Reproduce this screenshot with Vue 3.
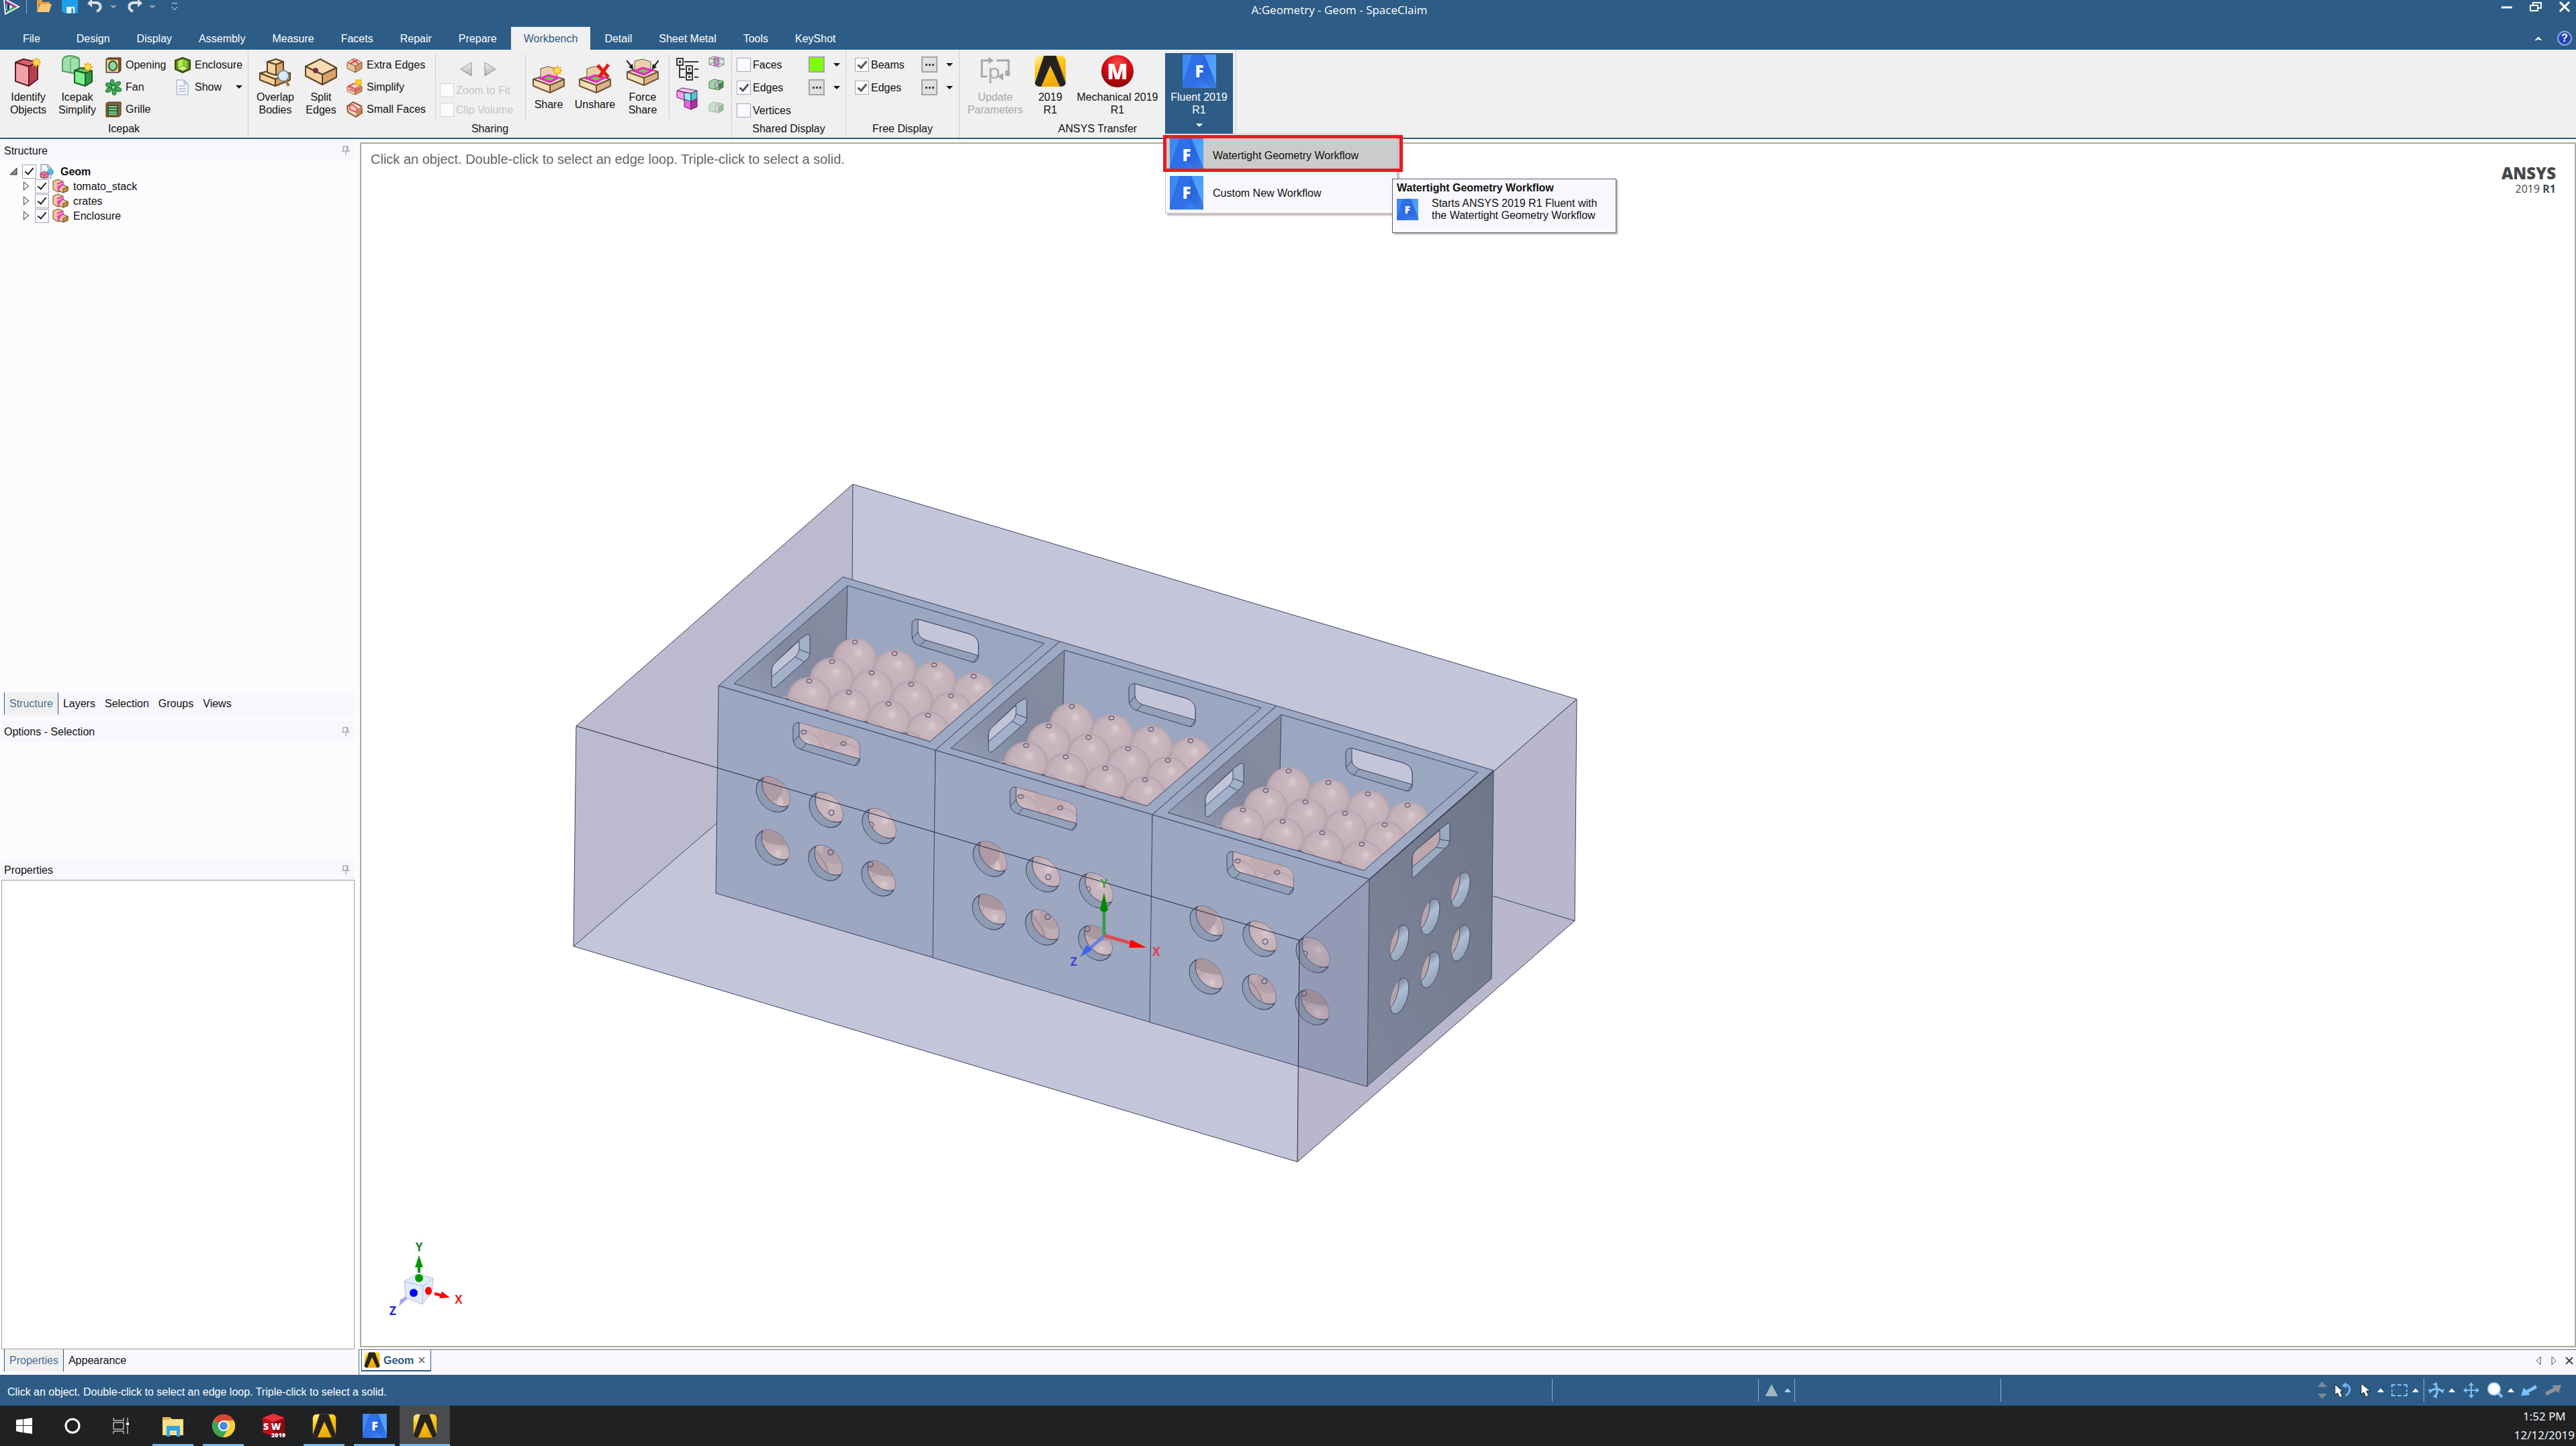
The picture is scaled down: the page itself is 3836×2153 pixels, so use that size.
<script setup>
import { reactive, ref } from "vue";

const tabs = [
    "Design",
    "Display",
    "Assembly",
    "Measure",
    "Facets",
    "Repair",
    "Prepare",
    "Workbench",
    "Detail",
    "Sheet Metal",
    "Tools",
    "KeyShot",
];
const activeTab = ref("Workbench");

const tree = reactive([
    { name: "tomato_stack", checked: true },
    { name: "crates", checked: true },
    { name: "Enclosure", checked: true },
]);

const shared = reactive([
    { name: "Faces", checked: false, swatch: "green" },
    { name: "Edges", checked: true, swatch: "dots" },
    { name: "Vertices", checked: false, swatch: null },
]);
const free = reactive([
    { name: "Beams", checked: true },
    { name: "Edges", checked: true },
]);

const panelTabs = ["Structure", "Layers", "Selection", "Groups", "Views"];

const taskItems = [
    { icon: "i-folder-win", title: "File Explorer", open: true },
    { icon: "i-chrome", title: "Chrome", open: true },
    { icon: "i-sw", title: "SolidWorks", open: false },
    { icon: "i-ansys", title: "Workbench", open: true },
    { icon: "i-fluent", title: "Fluent", open: true },
    { icon: "i-ansys", title: "SpaceClaim", open: true, active: true },
];

// tomatoes of one crate, back row first
const tomatoes = [];
for (let row = 0; row < 4; row++) {
    for (let col = 0; col < 4; col++) {
        tomatoes.push({
            x: 1273 + col * 59 - row * 34,
            y: 956 + col * 17 + row * 29,
        });
    }
}

const holes = [
    { x: 1151, y: 1183, shade: "sphere" },
    { x: 1230, y: 1206, shade: "none", dot: [8, 4] },
    { x: 1309, y: 1230, shade: "none", dot: [-12, -2] },
    { x: 1150, y: 1262, shade: "cap" },
    { x: 1229, y: 1285, shade: "arcs", dot: [8, -16] },
    { x: 1308, y: 1308, shade: "cap", dot: [-12, -21] },
];
const sideHoles = [
    [2175, 1325],
    [2130, 1365],
    [2084, 1404],
    [2175, 1404],
    [2130, 1444],
    [2084, 1483],
];
</script>

<template>
    <div class="window">
        <!-- icon set -->
        <svg class="defs" aria-hidden="true">
            <defs>
                <linearGradient id="g-yellow" x1="0" y1="0" x2="0.4" y2="1">
                    <stop offset="0" stop-color="#fff0a0" />
                    <stop offset="0.4" stop-color="#fdcb1c" />
                    <stop offset="1" stop-color="#f0a800" />
                </linearGradient>
                <radialGradient id="g-red" cx="0.5" cy="0.25" r="0.8">
                    <stop offset="0" stop-color="#ff4a4a" />
                    <stop offset="0.5" stop-color="#d40a14" />
                    <stop offset="1" stop-color="#7c0006" />
                </radialGradient>
                <linearGradient id="g-blue" x1="0" y1="0" x2="1" y2="0.3">
                    <stop offset="0" stop-color="#3b84f5" />
                    <stop offset="1" stop-color="#52a2fb" />
                </linearGradient>
                <linearGradient id="g-blue-front" x1="0" y1="0" x2="1" y2="1">
                    <stop offset="0" stop-color="#2f6fe8" />
                    <stop offset="0.6" stop-color="#2f6fe8" />
                    <stop offset="1" stop-color="#4a90f8" />
                </linearGradient>
                <linearGradient id="g-grey" x1="0" y1="0" x2="0" y2="1">
                    <stop offset="0" stop-color="#f4f4f4" />
                    <stop offset="1" stop-color="#b0b0b0" />
                </linearGradient>
                <g id="star">
                    <polygon
                        points="8,0 4,2 6,6 2,4 0,8 -2,4 -6,6 -4,2 -8,0 -4,-2 -6,-6 -2,-4 0,-8 2,-4 6,-6 4,-2"
                        fill="#f2a01c"
                    />
                    <circle r="4" fill="#ffe04a" />
                </g>
            </defs>
            <symbol id="i-logo" viewBox="0 0 26 26">
                <path d="M2 1 L24 13 L4 24 Z" fill="#1b3350" stroke="#fff" stroke-width="2" />
                <path d="M5 5 L20 13" stroke="#e03ab0" stroke-width="2" />
                <path d="M6 8 V19" stroke="#6ab0ff" stroke-width="2" />
                <path d="M7 20 L19 14" stroke="#3ed04a" stroke-width="2" />
                <path d="M10 10 L16 13 L10 17 Z" fill="#e8f0ff" />
            </symbol>
            <symbol id="i-open" viewBox="0 0 24 20">
                <path d="M1 19 V1 H8 L10 4 H20 V7 H5 Z" fill="#e89a3c" />
                <path d="M1 19 L6 7 H23 L19 19 Z" fill="#f8c878" />
            </symbol>
            <symbol id="i-save" viewBox="0 0 20 20">
                <path d="M0 0 H20 V19 H3 L0 16 Z" fill="#1f9fe6" />
                <path d="M6 11 H16 V19 H6 Z" fill="#e6f4fc" />
                <path d="M12 13 H14 V19 H12 Z" fill="#1f78b8" />
            </symbol>
            <symbol id="i-undo" viewBox="0 0 24 22">
                <path d="M3 6 H14 C22 8 21 16 14 19" fill="none" stroke="#d8dee8" stroke-width="4" />
                <path d="M0 7 L7 0 V13 Z" fill="#d8dee8" />
            </symbol>
            <symbol id="i-redo" viewBox="0 0 24 22">
                <path d="M21 6 H10 C2 8 3 16 10 19" fill="none" stroke="#d8dee8" stroke-width="4" />
                <path d="M24 7 L17 0 V13 Z" fill="#d8dee8" />
            </symbol>
            <symbol id="i-identify" viewBox="0 0 48 48">
                <g stroke="#5c1f26" stroke-width="2" stroke-linejoin="round">
                    <path d="M5 11 L17 6 L38 11 L25 17 Z" fill="#d9606a" />
                    <path d="M5 11 L25 17 V46 L5 39 Z" fill="#f2a0a8" />
                    <path d="M25 17 L38 11 V36 L25 46 Z" fill="#b8404c" />
                </g>
                <use href="#star" x="36" y="11" />
            </symbol>
            <symbol id="i-icepak" viewBox="0 0 48 48">
                <path d="M2 8 Q3 1 14 1 Q25 2 27 6 V28 Q22 25 18 27 L2 24 Z" fill="#9fe0ae" stroke="#4e9c5c" stroke-width="2" />
                <path d="M14 6 Q15 2 27 6 M14 6 V28" fill="none" stroke="#4e9c5c" stroke-width="1" />
                <g stroke="#1d5a2a" stroke-width="2" stroke-linejoin="round">
                    <path d="M20 23 L30 19 L46 23 L36 27 Z" fill="#5cc46c" />
                    <path d="M20 23 L36 27 V46 L20 41 Z" fill="#7ff08e" />
                    <path d="M36 27 L46 23 V40 L36 46 Z" fill="#2f9c40" />
                </g>
                <use href="#star" x="40" y="18" />
            </symbol>
            <symbol id="i-opening" viewBox="0 0 24 24">
                <path d="M1 3 L4 1 H23 V20 L20 23 H1 Z" fill="#7a4f26" stroke="#4e3214" />
                <rect x="2" y="4" width="17" height="18" fill="#f0c896" />
                <ellipse cx="11" cy="13" rx="6" ry="7" fill="#8cd8a4" stroke="#2c5a34" stroke-width="2" />
            </symbol>
            <symbol id="i-fan" viewBox="0 0 24 24">
                <g fill="#3fae55" stroke="#1d5a2c" stroke-width="1">
                    <ellipse cx="10" cy="5" rx="3" ry="5" />
                    <ellipse cx="18" cy="7" rx="5" ry="3" transform="rotate(-30 18 7)" />
                    <ellipse cx="19" cy="15" rx="5" ry="3" transform="rotate(25 19 15)" />
                    <ellipse cx="13" cy="19" rx="3" ry="5" />
                    <ellipse cx="5" cy="16" rx="5" ry="3" transform="rotate(-30 5 16)" />
                    <ellipse cx="5" cy="9" rx="5" ry="3" transform="rotate(25 5 9)" />
                    <circle cx="12" cy="12" r="3" fill="#7fe08e" />
                </g>
            </symbol>
            <symbol id="i-grille" viewBox="0 0 24 24">
                <path d="M1 3 L4 1 H23 V20 L20 23 H1 Z" fill="#8a5f32" stroke="#4e3214" />
                <rect x="3" y="5" width="16" height="16" fill="#2c5e34" />
                <path d="M5 8 H17 M5 12 H17 M5 16 H17 M5 19 H17" stroke="#8ed09a" stroke-width="2" />
            </symbol>
            <symbol id="i-enclosure" viewBox="0 0 24 24">
                <path d="M1 5 L12 1 L23 5 V18 L12 23 L1 18 Z" fill="#5e8a20" stroke="#33480f" stroke-width="2" />
                <path d="M5 6 L12 3 V12 L5 16 Z" fill="#b8ec50" />
                <path d="M12 3 L19 6 V16 L12 12 Z" fill="#8ccc30" />
                <path d="M5 17 L12 13 L19 17 L12 20 Z" fill="#d4f88c" />
            </symbol>
            <symbol id="i-doc" viewBox="0 0 24 24">
                <path d="M3 1 H14 L20 7 V23 H3 Z" fill="#f4f6fc" stroke="#98a4bc" />
                <path d="M14 1 V7 H20" fill="#c8d4ec" stroke="#98a4bc" />
                <path d="M6 10 H16 M6 14 H17 M6 18 H17" stroke="#8c98b4" stroke-width="1" />
            </symbol>
            <symbol id="i-overlap" viewBox="0 0 48 48">
                <g stroke="#5b4023" stroke-width="2" stroke-linejoin="round">
                    <path d="M1 27 L24 21 L46 27 L24 36 Z" fill="#f9dcb4" />
                    <path d="M1 27 L24 36 V46 L1 37 Z" fill="#f6cf9d" />
                    <path d="M24 36 L46 27 V37 L24 46 Z" fill="#d9a468" />
                    <path d="M12 10 L25 6 L36 10 L25 14 Z" fill="#f9dcb4" />
                    <path d="M12 10 L25 14 V30 L12 26 Z" fill="#f6cf9d" />
                    <path d="M25 14 L36 10 V26 L25 30 Z" fill="#d9a468" />
                </g>
                <path d="M39 37 L44 46" stroke="#a8703c" stroke-width="4" />
                <circle cx="36" cy="31" r="8" fill="#d4e8f6" stroke="#7b8894" stroke-width="2" />
            </symbol>
            <symbol id="i-split" viewBox="0 0 48 48">
                <g stroke="#5b4023" stroke-width="2" stroke-linejoin="round">
                    <path d="M1 17 L23 6 L47 19 L26 29 Z" fill="#f9dcb4" />
                    <path d="M1 17 L26 29 V44 L1 31 Z" fill="#f6cf9d" />
                    <path d="M26 29 L47 19 V33 L26 44 Z" fill="#d9a468" />
                </g>
                <circle cx="16" cy="23" r="4" fill="#7b2f4c" />
            </symbol>
            <symbol id="i-extra" viewBox="0 0 24 24">
                <g stroke="#7d6244" stroke-linejoin="round">
                    <path d="M1 8 L11 2 L23 8 L13 13 Z" fill="#f8d8b4" />
                    <path d="M1 8 L13 13 V23 L1 17 Z" fill="#eec39a" />
                    <path d="M13 13 L23 8 V17 L13 23 Z" fill="#c99260" />
                </g>
                <path d="M5 10 L17 4 M9 4 L18 10" stroke="#e8404c" stroke-width="2" />
            </symbol>
            <symbol id="i-simplify" viewBox="0 0 24 24">
                <g stroke="#8c6a4a" stroke-linejoin="round">
                    <path d="M1 11 L11 6 L23 11 L13 16 Z" fill="#fbe4d4" />
                    <path d="M1 11 L13 16 V23 L1 18 Z" fill="#f6dcc0" />
                    <path d="M13 16 L23 11 V18 L13 23 Z" fill="#c99260" />
                </g>
                <path d="M2 11 L12 6 M3 15 L12 18 L21 13 M4 10 L13 14 L20 10" fill="none" stroke="#f0505c" stroke-width="2" />
                <rect x="14" y="1" width="8" height="8" fill="#ffd21e" stroke="#e89a1c" />
            </symbol>
            <symbol id="i-small" viewBox="0 0 24 24">
                <path d="M1 7 L10 1 L22 7 L23 17 L14 23 L2 16 Z" fill="#f6dcc0" stroke="#7d5a3a" stroke-width="2" />
                <path d="M15 12 L22 8 V17 L14 22 Z" fill="#c48b58" />
                <path d="M4 7 L9 5 L16 11 L14 16 L5 12 Z" fill="#fbd0d0" stroke="#f0505c" stroke-width="2" />
            </symbol>
            <g id="shareBase">
                <g stroke="#6e5638" stroke-width="2" stroke-linejoin="round">
                    <path d="M1 25 L24 18 L47 25 L26 34 Z" fill="#f9e2c4" />
                    <path d="M1 25 L26 34 V45 L1 35 Z" fill="#f8dcb8" />
                    <path d="M26 34 L47 25 V35 L26 45 Z" fill="#dcb288" />
                    <path d="M12 9 L24 6 L36 10 V24 L24 20 L12 24 Z" fill="#ecd0ac" stroke-width="1" />
                </g>
                <path d="M12 24 L24 19 L38 23 L26 29 Z" fill="#6cc850" stroke="#f020c8" stroke-width="3" />
            </g>
            <symbol id="i-share" viewBox="0 0 48 48">
                <use href="#shareBase" />
                <use href="#star" x="37" y="12" />
            </symbol>
            <symbol id="i-unshare" viewBox="0 0 48 48">
                <use href="#shareBase" />
                <path d="M28 4 L44 22 M44 3 L30 22" stroke="#e01c1c" stroke-width="5" />
            </symbol>
            <symbol id="i-force" viewBox="0 0 48 48">
                <use href="#shareBase" />
                <path d="M0 8 L9 19 M48 8 L39 19" stroke="#1c1c1c" stroke-width="2" />
                <path d="M10 22 L3 18 L9 13 Z M38 22 L45 18 L39 13 Z" fill="#1c1c1c" />
            </symbol>
            <symbol id="i-tree" viewBox="0 0 34 34">
                <path d="M5 11 V29 H13 M5 17 H13 M12 6 H33 M27 17 H33 M27 29 H33" fill="none" stroke="#3c3c3c" stroke-width="2" />
                <g fill="#f0f0f0" stroke="#3c3c3c" stroke-width="2">
                    <rect x="1" y="1" width="9" height="10" />
                    <rect x="15" y="12" width="9" height="10" />
                    <rect x="15" y="24" width="9" height="9" />
                </g>
                <path d="M4 4 H7 V8 H4 Z M18 15 H21 V19 H18 Z M18 27 H21 V30 H18 Z" fill="#3c3c3c" />
            </symbol>
            <symbol id="i-blocks" viewBox="0 0 34 34">
                <g stroke="#4a2a58" stroke-width="1" stroke-linejoin="round">
                    <path d="M12 16 L22 20 V33 L12 29 Z" fill="#f060e0" />
                    <path d="M22 20 L31 16 V29 L22 33 Z" fill="#b02ea8" />
                    <path d="M1 5 L9 1 L31 5 L22 9 Z" fill="#ffc0f4" />
                    <path d="M1 5 L12 8 V19 L1 15 Z" fill="#ff9cf0" />
                    <path d="M12 8 L22 9 V21 L12 18 Z" fill="#8cf0f4" />
                    <path d="M22 9 L31 5 V17 L22 21 Z" fill="#50c4cc" />
                </g>
            </symbol>
            <symbol id="i-cubes" viewBox="0 0 24 18">
                <path d="M1 4 L8 1 L23 4 V13 L16 17 L1 13 Z" fill="#d8ecdc" stroke="#7a887c" />
                <path d="M1 4 L15 7 L23 4 M15 7 V17 M8 1 V10 L1 13 M8 10 L23 13" fill="none" stroke="#7a887c" />
                <path d="M9 4 L15 3 V13 L9 15 Z" fill="#7cc890" stroke="#d858c8" stroke-width="2" />
            </symbol>
            <symbol id="i-cubes-green" viewBox="0 0 24 18">
                <path d="M1 5 L8 1 L22 4 V13 L15 17 L1 14 Z" fill="#9cd8a4" stroke="#3f7c48" />
                <path d="M15 8 L22 4 V13 L15 17 Z" fill="#3f8c48" />
                <path d="M10 7 L15 3 V13 L10 15 Z" fill="#c8c0c8" stroke="#8a5a84" />
            </symbol>
            <symbol id="i-update" viewBox="0 0 44 42">
                <path d="M14 5 H2 V29 H10 M24 5 H42 V24 M28 29 H34" fill="none" stroke="#a8a8a8" stroke-width="3" />
                <path d="M12 0 L20 5 L12 10 Z M26 29 L34 23 V35 Z M37 20 H44 V28 H37 Z" fill="#a8a8a8" />
            </symbol>
            <symbol id="i-ansys" viewBox="0 0 46 46">
                <rect x="1" y="1" width="44" height="44" rx="7" fill="url(#g-yellow)" />
                <path d="M14 1 H31 L45 40 Q44 45 37 45 L23 15 L10 45 Q2 45 1 40 Z" fill="#262220" />
                <path d="M31 1 L45 40" stroke="#6b5a20" />
            </symbol>
            <symbol id="i-mech" viewBox="0 0 50 50">
                <circle cx="25" cy="25" r="24" fill="url(#g-red)" />
            </symbol>
            <symbol id="i-fluent" viewBox="0 0 50 50">
                <rect width="50" height="50" fill="url(#g-blue)" />
                <path d="M14 0 H32 L50 44 V50 H0 V42 Z" fill="url(#g-blue-front)" />
                <path d="M32 0 L50 44 V50 H42 L25 34 Z" fill="#2358c8" opacity="0.35" />
            </symbol>
            <symbol id="i-pin" viewBox="0 0 12 14">
                <path d="M2 8 V1 H9 V8 M8 1 V8 M0 8 H12 M6 8 V14" fill="none" stroke="#8c8c96" />
            </symbol>
            <symbol id="i-assembly" viewBox="0 0 24 22">
                <g stroke="#6b4a24" stroke-linejoin="round">
                    <path d="M1 4 L8 1 L16 4 V18 L8 20 L1 16 Z" fill="#f0c890" />
                    <path d="M9 12 L16 9 L23 12 V18 L16 21 L9 18 Z" fill="#f0c890" />
                    <path d="M16 15 L23 12 V18 L16 21 Z" fill="#c08a4c" />
                </g>
                <path d="M7 8 L15 5 M7 13 L17 8 M8 18 L13 10" stroke="#f02ce0" stroke-width="2" />
            </symbol>
            <symbol id="i-geom" viewBox="0 0 22 22">
                <path d="M2 1 H12 L17 6 V21 H2 Z" fill="#eef4fc" stroke="#70809c" />
                <path d="M12 1 V6 H17" fill="none" stroke="#70809c" />
                <circle cx="16" cy="12" r="5" fill="#58b4dc" />
                <path d="M1 14 L7 11 L13 14 V19 L7 22 L1 19 Z" fill="#d8905c" stroke="#7a3c5c" />
                <path d="M1 14 L7 17 L13 14 M7 17 V22" fill="none" stroke="#e03cc8" stroke-width="2" />
            </symbol>
            <symbol id="i-folder-win" viewBox="0 0 36 36">
                <path d="M2 5 H13 L16 8 H33 V32 H2 Z" fill="#fbe08c" />
                <path d="M2 5 H13 V9 H2 Z" fill="#e8b43c" />
                <path d="M8 18 H28 V34 H23 V25 H13 V34 H8 Z" fill="#35a4e4" />
            </symbol>
            <symbol id="i-chrome" viewBox="0 0 36 36">
                <circle cx="18" cy="18" r="17" fill="#f4c82c" />
                <path d="M18 18 L3 10 A17 17 0 0 1 33 10 Z" fill="#d8453a" />
                <path d="M18 18 L3 10 A17 17 0 0 0 17 35 L26 22 Z" fill="#3ca454" />
                <path d="M18 10 H33 A17 17 0 0 1 17 35 L26 20 Z" fill="#f8cf3c" />
                <circle cx="18" cy="18" r="8" fill="#fff" />
                <circle cx="18" cy="18" r="6" fill="#4a86e8" />
            </symbol>
            <symbol id="i-sw" viewBox="0 0 36 36">
                <path d="M1 6 L17 0 L34 6 V28 L18 34 L1 28 Z" fill="#b8101c" />
                <path d="M1 6 L17 0 L34 6 L18 12 Z" fill="#e8303c" />
                <path d="M18 12 L34 6 V28 L18 34 Z" fill="#8c0812" />
            </symbol>
            <symbol id="i-win" viewBox="0 0 24 24">
                <path d="M0 3 L10 2 V11 H0 Z M11 2 L24 0 V11 H11 Z M0 12 H10 V22 L0 20 Z M11 12 H24 V24 L11 22 Z" fill="#fff" />
            </symbol>
            <symbol id="i-cortana" viewBox="0 0 24 24">
                <circle cx="12" cy="12" r="10" fill="none" stroke="#fff" stroke-width="3" />
            </symbol>
            <symbol id="i-taskview" viewBox="0 0 24 24">
                <path d="M1 0 V4 H16 V0 M1 24 V20 H16 V24 M1 7 H16 V17 H1 Z M22 0 V6 M22 12 V24" fill="none" stroke="#fff" />
                <rect x="20" y="7" width="4" height="4" fill="#fff" />
            </symbol>
            <symbol id="i-cursor" viewBox="0 0 16 22">
                <path d="M1 1 V17 L5 14 L8 21 L12 19 L9 12 H15 Z" fill="#fff" stroke="#1c1c1c" />
            </symbol>
            <symbol id="i-cursor-undo" viewBox="0 0 26 24">
                <path d="M14 4 C25 2 26 15 17 20" fill="none" stroke="#6eb4f4" stroke-width="3" />
                <path d="M11 5 L18 0 V9 Z" fill="#6eb4f4" />
                <path d="M1 3 V19 L5 16 L8 23 L12 21 L9 14 H13 Z" fill="#fff" stroke="#1c1c1c" />
            </symbol>
            <symbol id="i-marquee" viewBox="0 0 26 20">
                <path d="M2 6 V2 H7 M10 2 H16 M19 2 H24 V6 M24 9 V12 M24 14 V18 H19 M16 18 H10 M7 18 H2 V14 M2 12 V9" fill="none" stroke="#7cc0fa" stroke-width="2" />
            </symbol>
            <symbol id="i-orbit" viewBox="0 0 24 24">
                <path d="M2 14 Q12 6 22 14 M10 2 Q17 12 10 22" fill="none" stroke="#7cc0fa" stroke-width="3" />
                <path d="M0 10 L2 17 L7 12 Z M24 10 L22 17 L17 12 Z M6 3 L13 0 L13 6 Z M6 21 L13 24 L13 18 Z" fill="#7cc0fa" />
            </symbol>
            <symbol id="i-pan" viewBox="0 0 24 24">
                <path d="M12 3 V21 M3 12 H21" stroke="#7cc0fa" stroke-width="2" />
                <path d="M12 0 L16 5 H8 Z M12 24 L16 19 H8 Z M0 12 L5 8 V16 Z M24 12 L19 8 V16 Z" fill="#7cc0fa" />
            </symbol>
            <symbol id="i-zoom" viewBox="0 0 24 24">
                <path d="M16 16 L22 22" stroke="#7cc0fa" stroke-width="4" />
                <circle cx="10" cy="10" r="9" fill="#fff" stroke="#a8d4fa" stroke-width="2" />
            </symbol>
            <symbol id="i-back" viewBox="0 0 24 16">
                <path d="M0 16 L4 4 L8 8 L22 0 L24 5 L11 12 L14 15 Z" fill="#7cc0fa" />
            </symbol>
            <symbol id="i-forward" viewBox="0 0 24 16">
                <path d="M24 0 L20 12 L16 9 L2 16 L0 11 L13 4 L10 1 Z" fill="#8a9098" />
            </symbol>
        </svg>

        <header class="titlebar">
            <div class="quick">
                <svg class="i26"><use href="#i-logo" /></svg>
                <span class="quick-sep"></span>
                <button title="Open"><svg class="i24"><use href="#i-open" /></svg></button>
                <button title="Save"><svg class="i24"><use href="#i-save" /></svg></button>
                <button title="Undo"><svg class="i24"><use href="#i-undo" /></svg></button>
                <span class="caret grey"></span>
                <button title="Redo"><svg class="i24"><use href="#i-redo" /></svg></button>
                <span class="caret grey"></span>
                <button title="Customize" class="customize">
                    <svg class="i10" viewBox="0 0 10 12">
                        <path d="M1 1 H9 M1 6 L5 11 L9 6" fill="none" stroke="#dfe8f2" />
                    </svg>
                </button>
            </div>
            <h1 class="title">A:Geometry - Geom - SpaceClaim</h1>
            <div class="win-buttons">
                <button title="Minimize">
                    <svg viewBox="0 0 20 20"><path d="M2 11 H18" stroke="#fff" stroke-width="3" /></svg>
                </button>
                <button title="Restore">
                    <svg viewBox="0 0 20 20">
                        <path d="M6 7 V4 H18 V12 H14 M2 8 H13 V16 H2 Z" fill="none" stroke="#fff" stroke-width="2" />
                    </svg>
                </button>
                <button title="Close">
                    <svg viewBox="0 0 20 20">
                        <path d="M3 3 L17 17 M17 3 L3 17" stroke="#fff" stroke-width="3" />
                    </svg>
                </button>
            </div>
        </header>

        <nav class="tabs">
            <button class="tab file">File</button>
            <button
                v-for="tab in tabs"
                :key="tab"
                class="tab"
                :class="{ active: tab === activeTab }"
                @click="activeTab = tab"
            >
                {{ tab }}
            </button>
            <div class="help">
                <button title="Collapse ribbon">
                    <svg class="i12" viewBox="0 0 12 12"><path d="M1 9 L6 4 L11 9 L6 7 Z" fill="#fff" stroke="#fff" /></svg>
                </button>
                <button title="Help" class="help-button">?</button>
            </div>
        </nav>

        <section class="ribbon">
            <div class="group">
                <div class="group-body pad-s">
                    <button class="big w74">
                        <svg class="i48"><use href="#i-identify" /></svg><span>Identify Objects</span>
                    </button>
                    <button class="big w72">
                        <svg class="i48"><use href="#i-icepak" /></svg><span>Icepak Simplify</span>
                    </button>
                    <div class="small-col first">
                        <button class="small"><svg class="i24"><use href="#i-opening" /></svg>Opening</button>
                        <button class="small"><svg class="i24"><use href="#i-fan" /></svg>Fan</button>
                        <button class="small"><svg class="i24"><use href="#i-grille" /></svg>Grille</button>
                    </div>
                    <div class="small-col second">
                        <button class="small"><svg class="i24"><use href="#i-enclosure" /></svg>Enclosure</button>
                        <button class="small">
                            <svg class="i24"><use href="#i-doc" /></svg>Show<span class="caret push"></span>
                        </button>
                    </div>
                </div>
                <div class="group-label">Icepak</div>
            </div>

            <div class="group">
                <div class="group-body pad-s">
                    <button class="big w70">
                        <svg class="i48"><use href="#i-overlap" /></svg><span>Overlap Bodies</span>
                    </button>
                    <button class="big w66">
                        <svg class="i48"><use href="#i-split" /></svg><span>Split Edges</span>
                    </button>
                    <div class="small-col third">
                        <button class="small"><svg class="i24"><use href="#i-extra" /></svg>Extra Edges</button>
                        <button class="small"><svg class="i24"><use href="#i-simplify" /></svg>Simplify</button>
                        <button class="small"><svg class="i24"><use href="#i-small" /></svg>Small Faces</button>
                    </div>
                    <div class="block nav-block">
                        <div class="nav-arrows">
                            <button title="Previous">
                                <svg viewBox="0 0 18 22"><path d="M17 1 V21 L1 11 Z" fill="url(#g-grey)" stroke="#8a8a8a" /></svg>
                            </button>
                            <button title="Next">
                                <svg viewBox="0 0 18 22"><path d="M1 1 V21 L17 11 Z" fill="url(#g-grey)" stroke="#8a8a8a" /></svg>
                            </button>
                        </div>
                        <label class="check off"><input type="checkbox" disabled />Zoom to Fit</label>
                        <label class="check off"><input type="checkbox" disabled />Clip Volume</label>
                    </div>
                    <div class="block">
                        <button class="big low w68">
                            <svg class="i48"><use href="#i-share" /></svg><span>Share</span>
                        </button>
                        <button class="big low w70">
                            <svg class="i48"><use href="#i-unshare" /></svg><span>Unshare</span>
                        </button>
                        <button class="big w72">
                            <svg class="i48"><use href="#i-force" /></svg><span>Force Share</span>
                        </button>
                    </div>
                    <div class="block icon-block">
                        <div class="icon-col wide">
                            <button title="Show tree"><svg class="i34"><use href="#i-tree" /></svg></button>
                            <button title="Show bodies"><svg class="i34"><use href="#i-blocks" /></svg></button>
                        </div>
                        <div class="icon-col">
                            <button title="Wireframe"><svg class="i24"><use href="#i-cubes" /></svg></button>
                            <button title="Solid"><svg class="i24"><use href="#i-cubes-green" /></svg></button>
                            <button title="Transparent" class="faded"><svg class="i24"><use href="#i-cubes-green" /></svg></button>
                        </div>
                    </div>
                </div>
                <div class="group-label">Sharing</div>
            </div>

            <div class="group shared">
                <div class="rows">
                    <div v-for="item in shared" :key="item.name" class="row">
                        <label class="check"><input v-model="item.checked" type="checkbox" />{{ item.name }}</label>
                        <template v-if="item.swatch">
                            <button class="swatch" :class="item.swatch" title="Colour"><i v-if="item.swatch === 'dots'"></i></button>
                            <span class="caret"></span>
                        </template>
                    </div>
                </div>
                <div class="group-label">Shared Display</div>
            </div>

            <div class="group free">
                <div class="rows">
                    <div v-for="item in free" :key="item.name" class="row">
                        <label class="check"><input v-model="item.checked" type="checkbox" />{{ item.name }}</label>
                        <button class="swatch dots" title="Line style"><i></i></button>
                        <span class="caret"></span>
                    </div>
                </div>
                <div class="group-label">Free Display</div>
            </div>

            <div class="group transfer">
                <div class="group-body">
                    <button class="big w106" disabled>
                        <svg class="i48" viewBox="-2 -4 48 50">
                            <use href="#i-update" width="44" height="42" />
                            <text x="11" y="32" class="glyph-p">p</text>
                        </svg>
                        <span>Update Parameters</span>
                    </button>
                    <button class="big w58">
                        <svg class="i48"><use href="#i-ansys" /></svg><span>2019<br />R1</span>
                    </button>
                    <button class="big w142">
                        <svg class="i50" viewBox="0 0 50 50">
                            <use href="#i-mech" />
                            <text x="25" y="37" class="glyph-m">M</text>
                        </svg>
                        <span>Mechanical 2019<br />R1</span>
                    </button>
                    <div class="fluent-wrap">
                        <button class="big fluent">
                            <svg class="i50" viewBox="0 0 50 50">
                                <use href="#i-fluent" />
                                <text x="25" y="34" class="glyph-f">F</text>
                            </svg>
                            <span>Fluent 2019<br />R1</span>
                            <i class="caret white"></i>
                        </button>
                        <div class="menu">
                            <button class="menu-item selected">
                                <svg class="i50" viewBox="0 0 50 50">
                                    <use href="#i-fluent" />
                                    <text x="25" y="34" class="glyph-f">F</text>
                                </svg>
                                Watertight Geometry Workflow
                            </button>
                            <button class="menu-item">
                                <svg class="i50" viewBox="0 0 50 50">
                                    <use href="#i-fluent" />
                                    <text x="25" y="34" class="glyph-f">F</text>
                                </svg>
                                Custom New Workflow
                            </button>
                            <div class="marker"></div>
                            <div class="tooltip" role="tooltip">
                                <b>Watertight Geometry Workflow</b>
                                <div class="tooltip-body">
                                    <svg class="i32" viewBox="0 0 50 50">
                                        <use href="#i-fluent" />
                                        <text x="25" y="34" class="glyph-f">F</text>
                                    </svg>
                                    <p>Starts ANSYS 2019 R1 Fluent with<br />the Watertight Geometry Workflow</p>
                                </div>
                            </div>
                        </div>
                    </div>
                </div>
                <div class="group-label">ANSYS Transfer</div>
            </div>
        </section>

        <main class="workspace">
            <aside class="side">
                <section class="panel structure">
                    <div class="panel-head">Structure<svg class="pin"><use href="#i-pin" /></svg></div>
                    <div class="tree">
                        <label class="tree-root">
                            <svg class="arrow-open" viewBox="0 0 12 12"><path d="M11 1 V11 H1 Z" fill="#8c8c8c" stroke="#2c2c2c" /></svg>
                            <input type="checkbox" checked />
                            <svg class="i22"><use href="#i-geom" /></svg>
                            <b>Geom</b>
                        </label>
                        <label v-for="item in tree" :key="item.name" class="tree-item">
                            <svg class="arrow-closed" viewBox="0 0 8 12"><path d="M1 1 L7 6 L1 11 Z" fill="#fff" stroke="#5c5c5c" /></svg>
                            <input v-model="item.checked" type="checkbox" />
                            <svg class="i24"><use href="#i-assembly" /></svg>
                            {{ item.name }}
                        </label>
                    </div>
                    <div class="panel-tabs">
                        <button v-for="(tab, index) in panelTabs" :key="tab" :class="{ active: index === 0 }">{{ tab }}</button>
                    </div>
                </section>
                <section class="panel options">
                    <div class="panel-head">Options - Selection<svg class="pin"><use href="#i-pin" /></svg></div>
                </section>
                <section class="panel properties">
                    <div class="panel-head">Properties<svg class="pin"><use href="#i-pin" /></svg></div>
                    <div class="box"></div>
                    <div class="panel-tabs">
                        <button class="active">Properties</button>
                        <button>Appearance</button>
                    </div>
                </section>
            </aside>

            <section class="document">
                <div class="viewport">
                    <svg class="scene" viewBox="538 214 3296 1790" preserveAspectRatio="xMinYMin meet">
                        <defs>
                            <radialGradient id="tomato" cx="0.5" cy="0.5" r="0.5" fx="0.6" fy="0.3">
                                <stop offset="0" stop-color="#dccdd2" />
                                <stop offset="0.25" stop-color="#cbb8bf" />
                                <stop offset="0.8" stop-color="#c3b0b8" />
                                <stop offset="1" stop-color="#b3a1ab" />
                            </radialGradient>
                            <linearGradient id="wall" x1="1" y1="0" x2="0.2" y2="1">
                                <stop offset="0" stop-color="#868ca0" />
                                <stop offset="0.6" stop-color="#82899e" />
                                <stop offset="1" stop-color="#929cb4" />
                            </linearGradient>
                            <linearGradient id="end-wall" x1="0" y1="1" x2="1" y2="0">
                                <stop offset="0" stop-color="#7e869c" />
                                <stop offset="1" stop-color="#707688" />
                            </linearGradient>
                            <linearGradient id="bore" x1="0" y1="0" x2="0" y2="1">
                                <stop offset="0" stop-color="#7e8aa0" />
                                <stop offset="0.4" stop-color="#aebfd2" />
                                <stop offset="1" stop-color="#94a2b8" />
                            </linearGradient>
                            <clipPath id="inside">
                                <path d="M1262 872 L1555 958 L1385 1104 L1093 1018 Z" />
                            </clipPath>
                            <clipPath id="grip-clip">
                                <path d="M1367 922 L1444 944 Q1457 949 1457 960 V976 L1378 953 Q1367 948 1367 939 Z" />
                            </clipPath>
                            <clipPath id="hole-front">
                                <circle r="25" transform="matrix(1 0.3 0 1 0 0)" />
                            </clipPath>
                            <clipPath id="hole-back" clip-path="url(#hole-front)">
                                <circle r="25" transform="matrix(1 0.3 0 1 9 -8)" />
                            </clipPath>
                            <clipPath id="side-front">
                                <circle r="24" transform="matrix(0.58 -0.5 0 1 0 0)" />
                            </clipPath>
                            <g id="grip">
                                <path d="M1367 922 L1444 944 Q1457 949 1457 960 V978 Q1456 986 1449 986 L1370 962 Q1358 958 1358 946 V928 Q1360 921 1367 922 Z" />
                            </g>
                        </defs>

                        <!-- enclosure volume -->
                        <path d="M1270 721 L2348 1041 L2345 1371 L1932 1730 L854 1409 L858 1081 Z" fill="#c5c5da" />
                        <path d="M1270 721 L858 1081 L854 1409 L1067 1226 L1268 1055 Z" fill="#bbbacf" />
                        <path d="M1935 1400 L2348 1041 L2345 1371 L1932 1730 Z" fill="#b8b7cb" />
                        <g class="edge">
                            <path d="M1270 721 L2348 1041 L2345 1371 L1932 1730 L854 1409 L858 1081 Z" />
                            <path d="M1270 721 L1268 1055 M854 1409 L1067 1226 M2223 1334 L2345 1371" />
                        </g>

                        <!-- crates -->
                        <path d="M1255 859 L2224 1147 L2038 1309 L2036 1617 L1066 1330 L1070 1021 Z" fill="#9da8c2" />
                        <path d="M2038 1309 L2224 1147 L2221 1457 L2036 1617 Z" fill="url(#end-wall)" class="edge" />
                        <g v-for="n in 3" :key="n" :transform="`translate(${(n - 1) * 323} ${(n - 1) * 96})`">
                            <path d="M1255 859 L1578 955 L1393 1117 L1070 1021 Z" fill="#9da8c2" class="edge" />
                            <path d="M1070 1021 L1393 1117 L1390 1426 L1066 1330 Z" fill="#9da7c1" class="edge" />
                            <g clip-path="url(#inside)">
                                <path d="M1262 872 L1555 958 L1385 1104 L1093 1018 Z" fill="#9ba7c1" />
                                <path d="M1262 872 L1093 1018 L1160 1044 L1200 1050 L1260 995 Z" fill="url(#wall)" />
                                <path d="M1262 872 L1260 955" class="edge" />
                                <path d="M1203 944 Q1206 945 1206 948 V974 Q1205 980 1199 984 L1155 1023 Q1150 1026 1149 1020 V998 Q1149 993 1153 988 L1192 951 Z" fill="#a2b1c9" class="edge" />
                                <path d="M1190 954 V967 Q1189 974 1184 978 L1149 1008 V998 Q1149 993 1153 988 Z" fill="#c3c3d8" class="edge" />
                                <path d="M1190 967 L1206 973 M1184 978 L1197 985" class="edge" />
                                <template v-for="(t, i) in tomatoes" :key="i">
                                    <circle :cx="t.x" :cy="t.y + 27" r="33" fill="url(#tomato)" />
                                    <ellipse :cx="t.x" :cy="t.y" rx="4" ry="3" class="edge" />
                                </template>
                            </g>
                            <path d="M1262 872 L1555 958 L1385 1104 L1093 1018 Z" class="edge" />
                            <use href="#grip" fill="#93a0b8" class="edge" />
                            <path d="M1367 922 L1444 944 Q1457 949 1457 960 V976 L1378 953 Q1367 948 1367 939 Z" fill="#c5c5da" class="edge" />
                            <path d="M1358 951 L1367 941 M1370 962 L1378 953 M1450 986 L1457 976" class="edge" />
                            <g transform="translate(-177 154)">
                                <use href="#grip" fill="#93a0b8" class="edge" />
                                <g clip-path="url(#grip-clip)">
                                    <rect x="1350" y="910" width="120" height="90" fill="#c9b3b9" />
                                    <circle cx="1420" cy="931" r="26" fill="#c0abb2" />
                                    <circle cx="1372" cy="965" r="32" fill="url(#tomato)" />
                                    <circle cx="1434" cy="985" r="33" fill="url(#tomato)" />
                                    <ellipse cx="1374" cy="936" rx="4" ry="3" class="edge" />
                                    <ellipse cx="1433" cy="953" rx="4" ry="3" class="edge" />
                                </g>
                                <path d="M1367 922 V939 Q1367 948 1378 953 L1457 976 M1358 951 L1367 941 M1370 962 L1378 953 M1450 986 L1457 976" class="edge" />
                            </g>
                            <g v-for="(h, i) in holes" :key="i" :transform="`translate(${h.x} ${h.y})`">
                                <circle r="25" transform="matrix(1 0.3 0 1 0 0)" fill="#8f9bb2" class="edge" />
                                <g clip-path="url(#hole-back)">
                                    <rect x="-30" y="-40" width="60" height="80" fill="#c0acb3" />
                                    <circle v-if="h.shade === 'none'" cx="4" cy="2" r="28" fill="url(#tomato)" />
                                    <template v-if="h.shade === 'sphere'">
                                        <path d="M0 34 L10 0 L30 34 Z" fill="#d4c2c7" />
                                        <circle cx="-6" cy="-10" r="21" fill="#ae9ba4" />
                                        <path d="M12 -28 Q26 0 8 30 L34 30 V-28 Z" fill="#bfaab1" />
                                    </template>
                                    <template v-if="h.shade === 'cap'">
                                        <circle cx="4" cy="18" r="27" fill="url(#tomato)" />
                                        <path d="M-30 -40 H30 V-4 Q8 0 -16 -12 Z" fill="#a9969f" />
                                    </template>
                                    <template v-if="h.shade === 'arcs'">
                                        <circle cx="-22" cy="4" r="26" fill="#b7a3ab" />
                                        <circle cx="16" cy="-18" r="20" fill="#b39fa7" />
                                        <path d="M-14 -16 Q4 0 6 24" fill="none" stroke="#a08d97" stroke-width="2" />
                                    </template>
                                    <ellipse v-if="h.dot" :cx="h.dot[0]" :cy="h.dot[1]" rx="4" ry="4" class="edge" />
                                </g>
                                <g clip-path="url(#hole-front)">
                                    <circle r="25" transform="matrix(1 0.3 0 1 9 -8)" class="edge" />
                                </g>
                            </g>
                        </g>

                        <!-- handle and holes of the end wall -->
                        <path d="M2156 1226 Q2160 1226 2159 1233 V1252 Q2158 1258 2153 1262 L2106 1306 Q2102 1308 2103 1302 V1278 Q2103 1272 2107 1267 L2144 1235 Z" fill="#9aaac0" class="edge" />
                        <path d="M2144 1236 V1250 Q2143 1257 2138 1262 L2103 1291 V1278 Q2103 1272 2107 1267 Z" fill="#bda7ad" class="edge" />
                        <path d="M2144 1250 L2159 1252 M2138 1262 L2152 1263" class="edge" />
                        <g v-for="(h, i) in sideHoles" :key="'s' + i" :transform="`translate(${h[0]} ${h[1]})`">
                            <circle r="24" transform="matrix(0.58 -0.5 0 1 0 0)" fill="url(#bore)" class="edge" />
                            <g clip-path="url(#side-front)">
                                <circle r="24" transform="matrix(0.58 -0.5 0 1 -15 -5)" fill="#b8a3aa" class="edge" />
                            </g>
                        </g>

                        <!-- enclosure edges in front of the crates -->
                        <path d="M1935 1400 L2038 1309 L2036 1617 L1933 1587 Z" fill="#6f6a86" opacity="0.2" />
                        <path d="M858 1081 L1935 1400 L2348 1041 M1935 1400 L1932 1730" class="edge dark" />

                        <!-- origin triad -->
                        <g class="axis">
                            <path d="M1644 1393 V1354" stroke="#3e9c50" stroke-width="5" />
                            <path d="M1644 1329 L1650 1355 L1644 1359 L1638 1355 Z" fill="#008a00" />
                            <path d="M1645 1393 L1683 1404" stroke="#dc4a56" stroke-width="5" />
                            <path d="M1707 1411 L1681 1411 L1684 1399 Z" fill="#f00" />
                            <path d="M1644 1394 L1624 1411" stroke="#6a82d8" stroke-width="5" />
                            <path d="M1608 1425 L1618 1407 L1627 1414 Z" fill="#3c64f0" />
                            <text x="1644" y="1322" fill="#3e9c3e">Y</text>
                            <text x="1722" y="1423" fill="#e03c48">X</text>
                            <text x="1599" y="1438" fill="#3c40d8">Z</text>
                        </g>

                        <!-- view cube -->
                        <g class="axis">
                            <path d="M606 1930 L594 1945 L596 1935 Z M612 1929 L594 1945 L604 1928 Z" fill="#a4a4f8" />
                            <path d="M620 1897 L645 1903 L643 1924 L629 1942 L604 1932 L602 1908 Z" fill="#e0eaf8" stroke="#b4bcd8" />
                            <path d="M602 1908 L630 1915 L629 1942 M630 1915 L645 1903" fill="none" stroke="#b4bcd8" />
                            <path d="M624 1895 V1882" stroke="#009a00" stroke-width="4" />
                            <path d="M624 1869 L630 1887 H618 Z" fill="#009a00" />
                            <circle cx="624" cy="1903" r="6" fill="#009a00" />
                            <circle cx="616" cy="1925" r="6" fill="#00f" />
                            <ellipse cx="638" cy="1922" rx="5" ry="6" fill="#f00" />
                            <path d="M647 1926 L658 1929" stroke="#f00" stroke-width="4" />
                            <path d="M670 1932 L654 1933 L658 1923 Z" fill="#f00" />
                            <text x="624" y="1863" fill="#1c7c2c">Y</text>
                            <text x="683" y="1941" fill="#f01c1c">X</text>
                            <text x="585" y="1958" fill="#1c1cf0">Z</text>
                        </g>
                    </svg>
                    <p class="hint">Click an object. Double-click to select an edge loop. Triple-click to select a solid.</p>
                    <div class="brand"><strong>ANSYS</strong><span>2019 <b>R1</b></span></div>
                </div>
                <div class="doc-tabs">
                    <button class="doc-tab">
                        <svg class="i24"><use href="#i-ansys" /></svg>Geom
                        <svg class="i10" viewBox="0 0 10 10"><path d="M1 1 L9 9 M9 1 L1 9" stroke="#77777f" stroke-width="2" /></svg>
                    </button>
                    <div class="doc-nav">
                        <svg viewBox="0 0 12 14"><path d="M9 1 V13 L3 7 Z" fill="none" stroke="#55555f" /></svg>
                        <svg viewBox="0 0 12 14"><path d="M3 1 V13 L9 7 Z" fill="none" stroke="#55555f" /></svg>
                        <svg viewBox="0 0 12 14"><path d="M1 2 L11 12 M11 2 L1 12" stroke="#44444c" stroke-width="2" /></svg>
                    </div>
                </div>
            </section>
        </main>

        <footer class="status">
            <span class="status-text">Click an object. Double-click to select an edge loop. Triple-click to select a solid.</span>
            <div class="cell wide"></div>
            <div class="cell warn">
                <svg class="i20" viewBox="0 0 20 20"><path d="M10 1 L19 18 Q19 19 18 19 H2 Q1 19 1 18 Z" fill="#a4b4c0" /></svg>
                <span class="caret up pale"></span>
            </div>
            <div class="cell wide"></div>
            <div class="cell tools">
                <svg class="updown" viewBox="0 0 16 26"><path d="M8 0 L15 8 H1 Z M1 18 H15 L8 26 Z" fill="#7c8a98" /></svg>
                <button title="Revert selection"><svg class="i26"><use href="#i-cursor-undo" /></svg></button>
                <button title="Select"><svg class="i22"><use href="#i-cursor" /></svg></button>
                <span class="caret up"></span>
                <button title="Box select"><svg class="i26"><use href="#i-marquee" /></svg></button>
                <span class="caret up"></span>
                <span class="tool-sep"></span>
                <button title="Spin"><svg class="i24"><use href="#i-orbit" /></svg></button>
                <span class="caret up"></span>
                <button title="Pan" class="spaced"><svg class="i24"><use href="#i-pan" /></svg></button>
                <button title="Zoom" class="spaced"><svg class="i24"><use href="#i-zoom" /></svg></button>
                <span class="caret up"></span>
                <button title="Previous view"><svg class="i24"><use href="#i-back" /></svg></button>
                <button title="Next view" class="spaced"><svg class="i24"><use href="#i-forward" /></svg></button>
            </div>
        </footer>

        <div class="taskbar">
            <div class="system">
                <button title="Start"><svg class="i24"><use href="#i-win" /></svg></button>
                <button title="Cortana"><svg class="i24"><use href="#i-cortana" /></svg></button>
                <button title="Task view"><svg class="i24"><use href="#i-taskview" /></svg></button>
            </div>
            <button
                v-for="(item, index) in taskItems"
                :key="index"
                class="task"
                :class="{ open: item.open, active: item.active }"
                :title="item.title"
            >
                <svg class="i36" viewBox="0 0 36 36">
                    <use :href="'#' + item.icon" />
                    <text v-if="item.icon === 'i-fluent'" x="18" y="25" class="glyph-f small-f">F</text>
                    <template v-if="item.icon === 'i-sw'">
                        <text x="2" y="24" class="glyph-sw">S W</text>
                        <text x="14" y="35" class="glyph-year">2019</text>
                    </template>
                </svg>
            </button>
            <div class="clock"><span>1:52 PM</span><span>12/12/2019</span></div>
        </div>
    </div>
</template>

<style>
body {
    margin: 0;
}
</style>

<style scoped>
.window {
    display: flex;
    flex-direction: column;
    min-height: 100vh;
    overflow: hidden;
    background: #fcfcff;
    color: #111;
    font-family: "Liberation Sans", Arial, sans-serif;
    font-size: 16px;
    line-height: 19px;
}

.defs {
    position: absolute;
    width: 0;
    height: 0;
}

svg {
    display: block;
    flex: none;
}

button {
    margin: 0;
    padding: 0;
    border: 0;
    background: none;
    color: inherit;
    font: inherit;
}

.i10 {
    width: 10px;
    height: 12px;
}
.i12 {
    width: 12px;
    height: 12px;
}
.i20 {
    width: 20px;
    height: 20px;
}
.i22 {
    width: 22px;
    height: 22px;
}
.i24 {
    width: 24px;
    height: 24px;
}
.i26 {
    width: 26px;
    height: 26px;
}
.i32 {
    width: 32px;
    height: 32px;
}
.i34 {
    width: 34px;
    height: 34px;
}
.i36 {
    width: 36px;
    height: 36px;
}
.i48 {
    width: 48px;
    height: 50px;
}
.i50 {
    width: 50px;
    height: 50px;
}

/* letters inside icons */
.glyph-f,
.glyph-m,
.glyph-p,
.glyph-sw,
.glyph-year {
    font-family: "Open Sans", sans-serif;
    font-weight: 800;
    fill: #fff;
}
.glyph-f {
    font-size: 24px;
    text-anchor: middle;
}
.glyph-f.small-f {
    font-size: 18px;
}
.glyph-m {
    font-size: 32px;
    text-anchor: middle;
}
.glyph-p {
    font-size: 30px;
    font-weight: 400;
    fill: #a8a8a8;
}
.glyph-sw {
    font-size: 14px;
}
.glyph-year {
    font-size: 9px;
}

.caret {
    flex: none;
    width: 0;
    border: 5px solid transparent;
    border-top-color: #111;
    border-bottom-width: 0;
}
.caret.grey {
    border-top-color: #8c9cac;
}
.caret.white {
    border-top-color: #fff;
}
.caret.up {
    border-top-width: 0;
    border-bottom: 6px solid #fff;
}
.caret.pale {
    border-bottom-color: #a8d0f4;
}
.caret.push {
    margin-left: auto;
}

/* title bar and tabs */
.titlebar {
    display: flex;
    height: 40px;
    background: #2d5c86;
    color: #fff;
}

.quick {
    display: flex;
    align-items: flex-start;
    gap: 14px;
    width: 262px;
    padding-left: 4px;
}
.quick svg {
    margin-top: -3px;
}
.quick .caret {
    margin: 8px 0 0 -4px;
}
.quick-sep {
    width: 1px;
    height: 20px;
    margin-left: -5px;
    background: #8fa8c0;
}
.quick .customize {
    margin: 7px 0 0 9px;
}

.title {
    flex: 1;
    margin: 0;
    padding-top: 3px;
    font-family: "Open Sans", sans-serif;
    font-size: 17px;
    font-weight: 400;
    line-height: 23px;
    text-align: center;
}

.win-buttons {
    display: flex;
    gap: 23px;
    height: 20px;
    padding-right: 7px;
}
.win-buttons svg {
    width: 20px;
    height: 20px;
}

.tabs {
    display: flex;
    gap: 2px;
    height: 34px;
    background: #2d5c86;
    color: #fff;
}
.tab {
    padding: 0 19px;
}
.tab.file {
    margin-right: 14px;
    padding-left: 34px;
}
.tab.active {
    background: #f0f0f0;
    color: #2d5c86;
}
.help {
    display: flex;
    align-items: center;
    gap: 22px;
    margin-left: auto;
    padding-right: 6px;
}
.help-button {
    width: 22px;
    height: 22px;
    border: 2px solid #8fa8d8;
    border-radius: 50%;
    background: #2444b8;
    font-weight: 700;
    line-height: 18px;
}

/* ribbon */
.ribbon {
    display: flex;
    height: 131px;
    border-bottom: 2px solid #2d5c86;
    background: #f0f0f0;
}
.group {
    display: flex;
    flex-direction: column;
    position: relative;
    padding: 4px 0 3px;
    border-right: 1px solid #cfcfcf;
}
.group-body {
    display: flex;
    flex: 1;
    align-items: flex-start;
}
.pad-s {
    padding-left: 5px;
}
.group-label {
    height: 20px;
    line-height: 20px;
    text-align: center;
}

.big {
    display: flex;
    flex-direction: column;
    align-items: center;
    gap: 4px;
    padding-top: 3px;
}
.big span {
    padding: 0 6px;
}
.big.low {
    padding-top: 14px;
}
.big:disabled {
    color: #a8a8a8;
}
.w58 {
    width: 58px;
}
.w66 {
    width: 66px;
}
.w68 {
    width: 68px;
}
.w70 {
    width: 70px;
}
.w72 {
    width: 72px;
}
.w74 {
    width: 74px;
}
.w106 {
    width: 106px;
}
.w142 {
    width: 142px;
}

.small-col {
    display: grid;
    grid-auto-rows: 33px;
    padding-top: 2px;
}
.small-col.first {
    width: 103px;
    padding-left: 6px;
}
.small-col.second {
    width: 97px;
    padding-right: 12px;
}
.small-col.third {
    width: 132px;
    padding-left: 5px;
}
.small {
    display: flex;
    align-items: center;
    gap: 6px;
    white-space: nowrap;
}

.block {
    display: flex;
    height: 98px;
    margin-top: 2px;
    padding-right: 3px;
    border-left: 1px solid #cfcfcf;
}
.block .big {
    padding-top: 1px;
}
.block .big.low {
    padding-top: 12px;
}
.nav-block {
    flex-direction: column;
    width: 124px;
    padding-left: 6px;
}
.nav-arrows {
    display: flex;
    gap: 18px;
    height: 40px;
    padding: 6px 0 0 30px;
    box-sizing: border-box;
}
.nav-arrows svg {
    width: 18px;
    height: 22px;
}
.nav-block .check {
    height: 29px;
}
.icon-block {
    gap: 14px;
    padding: 0 10px;
}
.icon-col {
    display: flex;
    flex-direction: column;
    gap: 10px;
}
.icon-col.wide {
    padding-top: 6px;
}
.faded {
    opacity: 0.5;
}

input[type="checkbox"] {
    appearance: none;
    flex: none;
    position: relative;
    width: 21px;
    height: 21px;
    margin: 0;
    border: 1px solid #a4a8b4;
    background: #fcfcff;
}
input[type="checkbox"]:checked::after {
    content: "";
    position: absolute;
    top: 1px;
    left: 6px;
    width: 5px;
    height: 11px;
    border: solid #55555c;
    border-width: 0 3px 3px 0;
    transform: rotate(40deg);
}
.check {
    display: flex;
    align-items: center;
    gap: 3px;
    white-space: nowrap;
}
.check.off {
    color: #c4c4c8;
}
.check.off input {
    border-color: #d0d0d8;
}

.rows {
    flex: 1;
    padding: 1px 8px 0 7px;
}
.free .rows {
    padding: 1px 9px 0 13px;
}
.row {
    display: flex;
    align-items: center;
    width: 154px;
    height: 34px;
}
.free .row {
    width: 146px;
}
.row .check {
    flex: 1;
}
.row .caret {
    margin-left: 13px;
}
.swatch {
    display: grid;
    place-items: center;
    width: 24px;
    height: 24px;
    border: 2px solid #a4a4a4;
    background: #e0e0e0;
}
.swatch.green {
    background: #80ff00;
}
.swatch i {
    width: 13px;
    height: 3px;
    background: repeating-linear-gradient(90deg, #444 0 3px, transparent 3px 5px);
}

.transfer .group-body {
    padding-right: 4px;
}
.fluent-wrap {
    position: relative;
    margin-bottom: -20px;
}
.fluent {
    width: 101px;
    height: 120px;
    margin-top: 1px;
    padding-top: 2px;
    box-sizing: border-box;
    background: #2d5c86;
    color: #fff;
}
.fluent .caret {
    margin-top: 7px;
}
.menu {
    position: absolute;
    top: 121px;
    left: 0;
    z-index: 2;
    width: 344px;
    padding: 6px 0 5px;
    border: 1px solid #c4c8d4;
    background: #f7f7fc;
    box-shadow: 3px 3px 2px #c8b8b8;
}
.menu-item {
    display: flex;
    align-items: center;
    gap: 14px;
    width: 100%;
    padding-left: 6px;
    white-space: nowrap;
}
.menu-item.selected {
    height: 50px;
    margin-bottom: 6px;
    background: #cbcbcb;
}
.marker {
    position: absolute;
    top: 1px;
    left: -4px;
    width: 347px;
    height: 45px;
    border: 5px solid #e81c24;
}
.tooltip {
    position: absolute;
    top: 66px;
    left: 337px;
    width: 322px;
    padding: 3px 4px 16px 6px;
    border: 1px solid #5c5c68;
    background: #f7f7fc;
    box-shadow: 2px 2px 2px #b4b4b8;
    white-space: nowrap;
}
.tooltip-body {
    display: flex;
    align-items: center;
    gap: 20px;
    margin-top: 5px;
}
.tooltip p {
    margin: 0;
    line-height: 18px;
}

/* side panels */
.workspace {
    display: flex;
    flex: 1;
}
.side {
    display: flex;
    flex: none;
    flex-direction: column;
    width: 526px;
    padding: 2px 6px 0 2px;
}
.panel {
    display: flex;
    flex-direction: column;
}
.structure {
    flex: 860 1 0;
    margin-bottom: 5px;
}
.options {
    flex: 206 1 0;
}
.properties {
    flex: 767 1 0;
}
.panel-head {
    display: flex;
    align-items: center;
    justify-content: space-between;
    height: 30px;
    padding: 0 7px 0 4px;
    background: #f7f7fc;
}
.pin {
    width: 12px;
    height: 14px;
}
.tree {
    flex: 1;
    padding-top: 5px;
}
.tree label {
    display: flex;
    align-items: center;
    height: 22px;
}
.tree input {
    box-sizing: border-box;
    margin-right: 5px;
}
.tree input:checked::after {
    border-width: 0 2px 2px 0;
    border-color: #222;
}
.tree-root {
    padding-left: 12px;
}
.tree-root b {
    margin-left: 9px;
}
.arrow-open {
    width: 12px;
    height: 12px;
    margin-right: 7px;
}
.tree-item {
    padding-left: 32px;
}
.tree-item .i24 {
    height: 22px;
    margin-right: 7px;
}
.arrow-closed {
    width: 10px;
    height: 14px;
    margin-right: 8px;
}
.box {
    flex: 1;
    border: 1px solid #9c9ca4;
    background: #fff;
}
.panel-tabs {
    display: flex;
    align-items: flex-start;
    height: 38px;
    padding-left: 4px;
    background: #f7f7fc;
}
.panel-tabs button {
    height: 33px;
    padding: 0 7px;
}
.panel-tabs .active {
    border: solid #2d5c86;
    border-width: 0 1px;
    background: #f0f0f0;
    color: #4a6f94;
}

/* document area */
.document {
    display: flex;
    flex: 1;
    flex-direction: column;
    min-width: 0;
    padding-top: 5px;
}
.viewport {
    flex: 1;
    position: relative;
    margin-left: 2px;
    border: 2px solid #a9ac98;
    background: #fff;
}
.scene {
    position: absolute;
    width: 100%;
    height: 100%;
}
.edge {
    stroke: #3a4262;
    stroke-width: 1px;
}
.edge:not([fill]) {
    fill: none;
}
.edge.dark {
    stroke: #20243c;
}
.axis text {
    font-family: "Open Sans", sans-serif;
    font-size: 17px;
    font-weight: 700;
    text-anchor: middle;
}
.hint {
    position: absolute;
    top: 11px;
    left: 14px;
    margin: 0;
    color: #666;
    font-size: 20px;
    line-height: 24px;
}
.brand {
    position: absolute;
    top: 30px;
    right: 28px;
    color: #48484a;
    font-family: "Open Sans", sans-serif;
    text-align: right;
}
.brand strong {
    display: block;
    font-size: 24px;
    font-weight: 800;
    line-height: 27px;
}
.brand span {
    display: block;
    font-size: 16px;
    line-height: 20px;
}
.doc-tabs {
    display: flex;
    align-items: flex-start;
    justify-content: space-between;
    height: 37px;
    margin-top: 3px;
    padding-left: 3px;
    border: solid #5c6c80;
    border-width: 1px 0 0 1px;
    background: #f7f7fc;
}
.doc-tab {
    display: flex;
    align-items: center;
    gap: 5px;
    height: 32px;
    padding: 0 8px 0 3px;
    border: solid #2d5c86;
    border-width: 0 1px 2px;
    background: #fff;
    color: #2d5c86;
    font-weight: 700;
}
.doc-tab .i10 {
    margin-left: 2px;
}
.doc-nav {
    display: flex;
    gap: 11px;
    padding: 9px 4px 0 0;
}
.doc-nav svg {
    width: 12px;
    height: 14px;
}

/* status bar */
.status {
    display: flex;
    align-items: center;
    height: 46px;
    background: #2d5c86;
    color: #fff;
}
.status-text {
    flex: 1;
    padding: 4px 0 0 11px;
}
.cell {
    display: flex;
    align-items: center;
    box-sizing: border-box;
    height: 34px;
    border-left: 1px solid #8fb0d0;
}
.cell.wide {
    width: 8%;
}
.warn {
    gap: 9px;
    width: 54px;
    padding-left: 9px;
}
.tools {
    gap: 10px;
    justify-content: flex-end;
    width: 857px;
    padding-right: 22px;
}
.tools .spaced {
    margin-left: 2px;
}
.tools .caret {
    margin-left: -4px;
}
.updown {
    width: 16px;
    height: 26px;
}
.tool-sep {
    width: 1px;
    height: 36px;
    margin: 0 -4px 0 -3px;
    background: #8fb0d0;
}

/* taskbar */
.taskbar {
    display: flex;
    height: 60px;
    background: #202123;
    color: #fff;
}
.system {
    display: grid;
    grid-template-columns: repeat(3, 72px);
    margin-right: 4px;
}
.system button,
.task {
    display: grid;
    place-items: center;
}
.task {
    position: relative;
    width: 75px;
}
.task.active {
    background: #4a4b4d;
}
.task.open::after {
    content: "";
    position: absolute;
    right: 7px;
    bottom: 0;
    left: 7px;
    height: 3px;
    background: #76b9ed;
}
.task.active::after {
    right: 0;
    left: 0;
}
.clock {
    display: flex;
    flex-direction: column;
    align-items: center;
    margin-left: auto;
    padding: 2px 2px 0 0;
    font-family: "Open Sans", sans-serif;
    font-size: 17px;
    line-height: 28px;
}
</style>
